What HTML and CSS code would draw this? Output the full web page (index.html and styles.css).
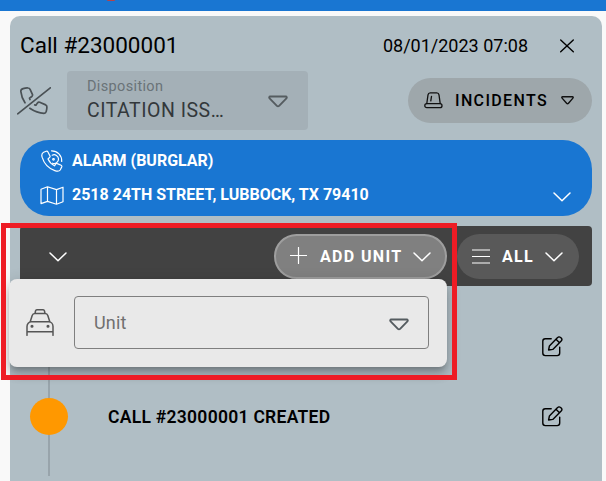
FILE: index.html
```html
<!DOCTYPE html>
<html lang="en">
<head>
<meta charset="utf-8">
<title>Call #23000001</title>
<link rel="stylesheet" href="styles.css">
</head>
<body>
<div class="appbar"><span class="alert-dot"></span></div>
<main class="card">
  <header class="card-header">
    <h1 class="title">Call #23000001</h1>
    <time class="date">08/01/2023 07:08</time>
    <svg class="close" width="14" height="14" viewBox="0 0 14 14"><path d="M.7.9 13.3 12.8M13.3.9.7 12.8"/></svg>
  </header>
  <section class="disposition-row">
    <svg class="phone-off" width="34" height="28" viewBox="0 0 34 28"><path d="M8 15.800C5.500 12 4.200 8 3.800 4.300c0-1.500.9-2.300 2.300-2.700 1.700-.5 3.400-.7 5-.6 1 0 1.600.5 2 1.300l2.300 5c.4 1 .1 1.600-.6 2.200l-2.300 1.700.5 1.300M12.800 21.300c4.700 3.200 9.700 4.900 14.200 5 1.200 0 1.900-.6 2.200-1.700.5-1.700.7-3.300.7-4.700 0-1-.4-1.600-1.200-2l-6-2.600c-1-.4-1.600-.2-2.200.6l-1.600 2.400-1.200-.4M.7 26.800 33.300.8"/></svg>
    <div class="disposition">
      <div class="disposition-text">
        <div class="label">Disposition</div>
        <div class="value">CITATION ISS…</div>
      </div>
      <svg class="triangle" width="20" height="13" viewBox="0 0 20 13"><path d="M2.200 1.500h15.600c1 0 1.300 1.200.6 1.900l-7.300 7.400c-.7.700-1.500.7-2.200 0L1.600 3.400c-.7-.7-.4-1.900.6-1.900z"/></svg>
    </div>
    <button class="pill incidents">
      <svg class="siren" width="19" height="17" viewBox="0 0 19 17"><rect x=".8" y="11.700" width="17.200" height="4" rx="2"/><path d="M2.800 11.500 4 2.800C4.200 1.400 4.900.8 6.300.8h6.400c1.400 0 2.100.6 2.300 2l1.200 8.700M7.500 4.300l-.7 4.500"/></svg>
      <span>INCIDENTS</span>
      <svg class="triangle-small" width="13" height="9" viewBox="0 0 13 9"><path d="M1.500.8h10c.7 0 .9.800.4 1.300L7.500 7.200c-.6.700-1.300.7-1.900 0L1.100 2.100C.6 1.600.8.8 1.500.8z"/></svg>
    </button>
  </section>
  <section class="location">
    <div class="location-line">
      <svg class="white-icon" width="22" height="22" viewBox="0 0 22 22"><path d="M5.200 1.200 2.600 2.300C.7 3.200.5 5 1.100 7.200c2 6.600 6 11.200 12.700 13.400 2.500.8 4.500.7 5.400-.6l1.500-3.100c.3-.7 0-1.300-.6-1.600l-3.800-1.700c-.6-.3-1.200-.1-1.500.4l-1.300 1.800C10.800 14.500 8.500 12.100 7 9l1.600-1.600c.5-.4.6-.9.4-1.400L6.800 1.700c-.3-.6-.9-.8-1.600-.5z"/><path d="M11.200 5.200a4.400 4.400 0 1 1 .2 8M10.500.8a10 10 0 0 1 10.200 10.700"/><circle cx="12.500" cy="9.300" r=".8"/></svg>
      <span>ALARM (BURGLAR)</span>
    </div>
    <div class="location-line">
      <svg class="white-icon" width="24" height="19" viewBox="0 0 24 19"><path d="M1 3.200 7.500.8l9 2.800L23 1.200v14.500l-6.500 2.500-9-2.800L1 17.600zM7.500.8v14.600M16.500 3.600v14.600"/></svg>
      <span>2518 24TH STREET, LUBBOCK, TX 79410</span>
      <svg class="chevron" width="18" height="10" viewBox="0 0 18 10"><path d="m1 1 8 7.800L17 1"/></svg>
    </div>
  </section>
  <section class="toolbar">
    <svg class="chevron collapse" width="18" height="10" viewBox="0 0 18 10"><path d="m1 1 8 7.800L17 1"/></svg>
    <button class="pill add-unit">
      <svg class="white-icon" width="17" height="17" viewBox="0 0 17 17"><path d="M.5 8.500h16M8.500.5v16"/></svg>
      <span>ADD UNIT</span>
      <svg class="chevron" width="18" height="10" viewBox="0 0 18 10"><path d="m1 1 8 7.800L17 1"/></svg>
    </button>
    <button class="pill all">
      <svg class="white-icon" width="18" height="15" viewBox="0 0 18 15"><path d="M0 1h18M0 7.500h18M0 14h18"/></svg>
      <span>ALL</span>
      <svg class="chevron" width="18" height="10" viewBox="0 0 18 10"><path d="m1 1 8 7.800L17 1"/></svg>
    </button>
  </section>
  <section class="timeline">
    <div class="event">
      <div class="rail"></div>
      <div class="event-text"></div>
      <svg class="edit" width="21" height="21" viewBox="0 0 21 21"><path d="M9.200 2.700H3.300C1.700 2.700.8 3.600.8 5.200v11.900c0 1.600.9 2.500 2.500 2.500h11.900c1.600 0 2.500-.9 2.500-2.500v-6M6.600 14l.8-4L15.600 1.600c.8-.9 2-1 2.900-.2l.7.7c.9.900.8 2.100 0 2.900L10.800 13.400zM14 3.300l3.500 3.500"/></svg>
    </div>
    <div class="event">
      <div class="rail"><span class="marker"></span></div>
      <div class="event-text">CALL #23000001 CREATED</div>
      <svg class="edit" width="21" height="21" viewBox="0 0 21 21"><path d="M9.200 2.700H3.300C1.700 2.700.8 3.600.8 5.200v11.900c0 1.600.9 2.500 2.500 2.500h11.900c1.600 0 2.500-.9 2.500-2.500v-6M6.600 14l.8-4L15.600 1.600c.8-.9 2-1 2.900-.2l.7.7c.9.900.8 2.100 0 2.900L10.800 13.400zM14 3.300l3.500 3.500"/></svg>
    </div>
  </section>
</main>
<div class="menu">
  <svg class="car" width="28" height="27" viewBox="0 0 28 27"><path d="M9 4.500 9.500 2c.2-.8.600-1.200 1.400-1.200h6.200c.8 0 1.200.4 1.400 1.200l.5 2.500M4.200 12.700l2-6.200c.4-1.300 1.200-2 2.700-2h10.200c1.500 0 2.300.7 2.700 2l2 6.200M1 26.300v-8.800c0-2.500 1.800-4.800 4.300-4.800h17.400c2.500 0 4.300 2.300 4.300 4.800v8.800M1 22.700h26"/><circle cx="6" cy="17.300" r=".8"/><circle cx="22" cy="17.300" r=".8"/></svg>
  <div class="unit-field">
    <span>Unit</span>
    <svg class="triangle" width="20" height="13" viewBox="0 0 20 13"><path d="M2.200 1.500h15.600c1 0 1.300 1.200.6 1.900l-7.300 7.400c-.7.700-1.500.7-2.200 0L1.600 3.400c-.7-.7-.4-1.900.6-1.900z"/></svg>
  </div>
</div>
<div class="highlight"></div>
</body>
</html>
```
FILE: styles.css
```css
* { box-sizing: border-box; }
html, body { height: 100%; }
body {
  margin: 0;
  overflow: hidden;
  position: relative;
  display: flex;
  flex-direction: column;
  background: #f9f9f9;
  font-family: Roboto, "Liberation Sans", sans-serif;
  color: #000;
}
svg { flex: none; fill: none; stroke-linecap: round; stroke-linejoin: round; }
button { font: inherit; color: inherit; border: 0; margin: 0; }
.appbar { flex: none; height: 11px; background: #1976d2; padding-left: 107px; }
.alert-dot { display: block; width: 8px; height: 1px; background: #b3434b; border-radius: 0 0 4px 4px; }
.card {
  flex: 1;
  margin: 5px 4px 0 10px;
  padding: 0 10px;
  background: #b0bec5;
  border-radius: 10px 10px 0 0;
}
.card-header { height: 55px; padding: 0 18px 0 0; display: flex; align-items: center; }
.title { margin: 3px 0 0 0; flex: 1; font-size: 22.500px; font-weight: 400; line-height: 30px; }
.date { font-size: 18px; margin: 4px 32px 0 0; }
.close { margin-top: 5px; stroke: #000; stroke-width: 1.400; }
.disposition-row { height: 59px; display: flex; align-items: center; margin-left: -3px; }
.phone-off { stroke: #4a5155; stroke-width: 1.700; }
.disposition {
  width: 241px;
  height: 59px;
  margin: 0 100px 0 16px;
  padding: 0 20px;
  display: flex;
  align-items: center;
  justify-content: space-between;
  background: #a4b0b7;
  border-radius: 4px;
}
.disposition .triangle { margin-top: 2px; }
.label { font-size: 14.500px; line-height: 18px; letter-spacing: .35px; color: #6a7378; }
.value { font-size: 19.500px; line-height: 24px; margin-top: 3px; letter-spacing: .5px; color: #33383b; white-space: nowrap; }
.triangle { stroke: #555c60; stroke-width: 1.900; }
.pill {
  height: 45px;
  border-radius: 23px;
  display: flex;
  align-items: center;
  font-size: 16px;
  font-weight: 500;
  letter-spacing: 1.350px;
  white-space: nowrap;
}
.incidents { width: 184px; padding: 0 18px 0 16px; background: #9ea7ab; }
.incidents span { flex: 1; text-align: left; margin-left: 12px; }
.siren, .triangle-small { stroke: #111; stroke-width: 1.400; }
.siren { stroke-width: 1.300; }
.location {
  height: 76px;
  margin-top: 10px;
  padding: 4px 21px 4px 20px;
  border-radius: 29px;
  background: #1976d2;
  color: #fff;
  font-size: 16px;
  font-weight: 700;
}
.location-line { height: 34px; display: flex; align-items: center; }
.location-line span { flex: 1; margin: -2px 0 0 8px; }
.location-line .white-icon { width: 24px; }
.location-line .chevron { margin-top: 3px; }
.white-icon { stroke: #fff; stroke-width: 1.200; }
.chevron { stroke: #fff; stroke-width: 1.500; }
.toolbar {
  height: 60px;
  margin-top: 10px;
  padding-right: 13px;
  display: flex;
  align-items: center;
  background: #424242;
  border-radius: 4px;
  color: #fff;
}
.collapse { margin: 2px auto 0 29px; }
.add-unit { width: 173px; padding: 0 14px 0 15px; border: 2px solid #9e9e9e; background: #808080; font-weight: 700; }
.add-unit .white-icon { margin: -1px 0 0 -1px; }
.add-unit span { flex: 1; text-align: left; margin-left: 13px; }
.all { width: 122px; margin-left: 10px; padding: 0 16px 0 15px; background: #595959; font-weight: 700; }
.all span { flex: 1; text-align: left; margin-left: 12px; }
.pill .chevron { margin-top: 1px; }
.timeline {
  height: 190px;
  padding: 25px 29px 0 10px;
  background: linear-gradient(#98a4ab, #98a4ab) 28px 0 / 2px 190px no-repeat;
}
.event { height: 70px; display: flex; align-items: center; }
.rail { width: 78px; }
.marker { display: block; width: 38px; height: 37px; border-radius: 50%; background: #ff9800; }
.event-text { flex: 1; margin-top: 2px; font-size: 17.500px; font-weight: 600; letter-spacing: .28px; }
.edit { stroke: #000; stroke-width: 1.400; }
.menu {
  position: absolute;
  left: 9px;
  top: 279px;
  width: 438px;
  height: 88px;
  padding: 0 18px 1px 17px;
  display: flex;
  align-items: center;
  justify-content: space-between;
  background: #e9e9e9;
  border-radius: 8px;
  box-shadow: 0 5px 5px -3px rgba(0,0,0,.2), 0 8px 10px 1px rgba(0,0,0,.14), 0 3px 14px 2px rgba(0,0,0,.12);
}
.car { stroke: #555; stroke-width: 1.500; }
.unit-field {
  width: 355px;
  height: 53px;
  padding: 0 19px;
  display: flex;
  align-items: center;
  justify-content: space-between;
  border: 1px solid #7f7f7f;
  border-radius: 4px;
  color: #707070;
  font-size: 18px;
  letter-spacing: .2px;
}
.unit-field .triangle { margin-top: 3px; }
.highlight {
  position: absolute;
  left: 1px;
  top: 223px;
  width: 456px;
  height: 157px;
  border: 5px solid #ee1c25;
}
```
